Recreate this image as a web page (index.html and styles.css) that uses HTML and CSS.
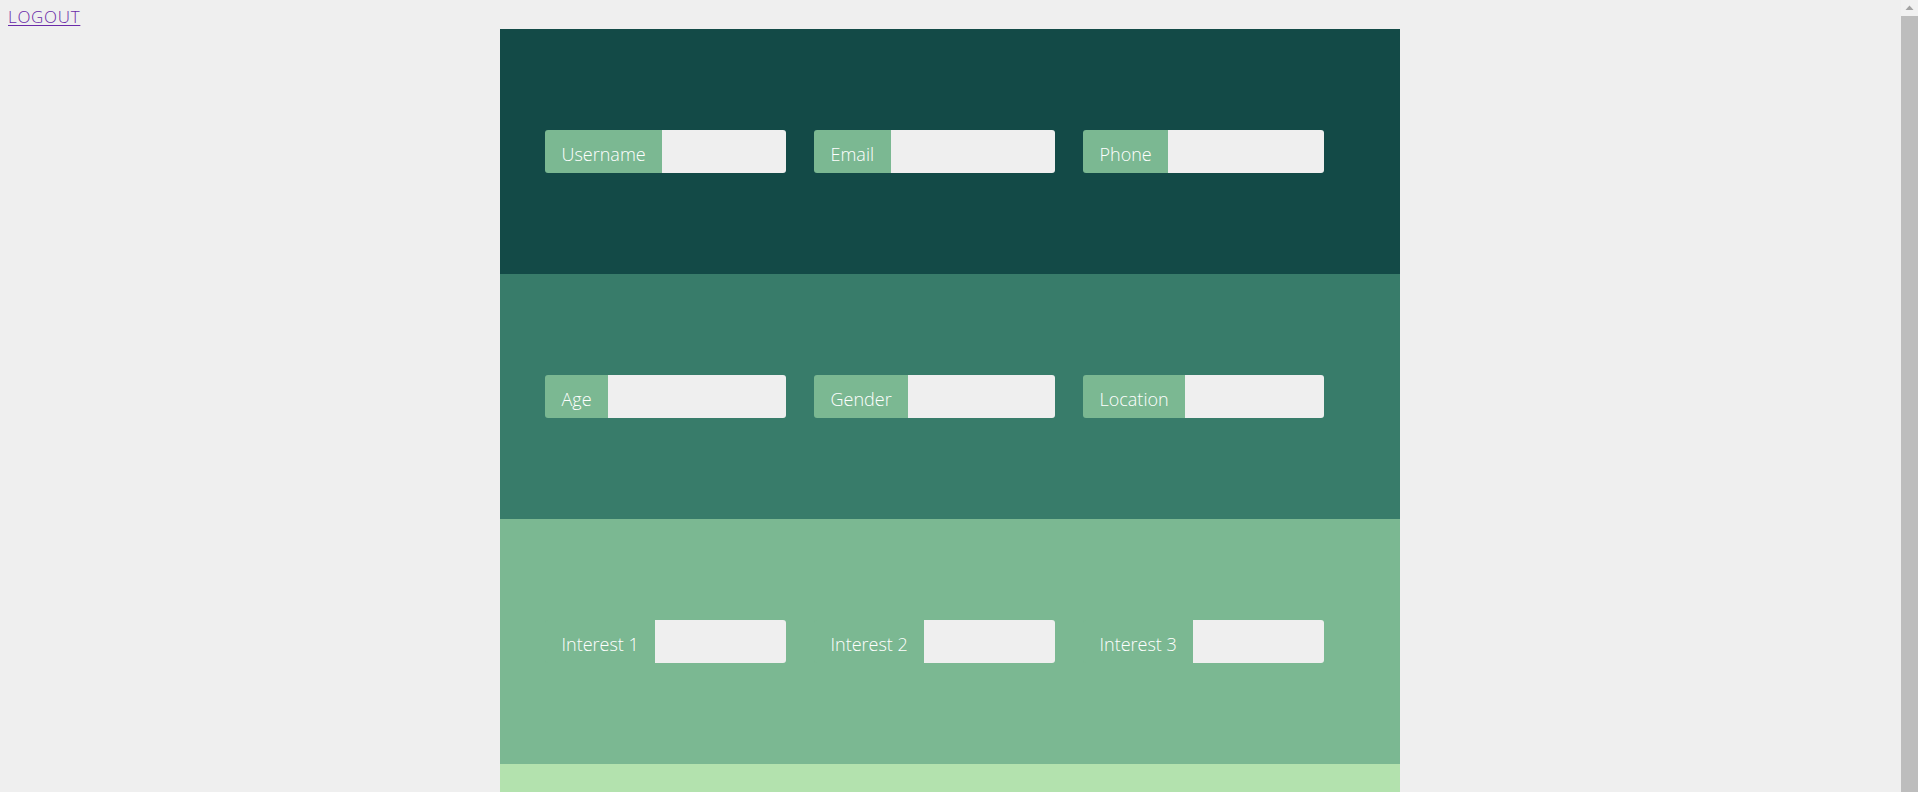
FILE: index.html
```html
<!DOCTYPE html>
<html>
<head>
<meta charset="utf-8">
<link rel="stylesheet" href="styles.css">
</head>
<body>
<a class="logout" href="#">LOGOUT</a>
<div class="container">
  <section class="band band-1">
    <div class="group"><span class="label">Username</span><input class="field" type="text"></div>
    <div class="group"><span class="label">Email</span><input class="field" type="text"></div>
    <div class="group"><span class="label">Phone</span><input class="field" type="text"></div>
  </section>
  <section class="band band-2">
    <div class="group"><span class="label">Age</span><input class="field" type="text"></div>
    <div class="group"><span class="label">Gender</span><input class="field" type="text"></div>
    <div class="group"><span class="label">Location</span><input class="field" type="text"></div>
  </section>
  <section class="band band-3">
    <div class="group"><span class="label">Interest 1</span><input class="field" type="text"></div>
    <div class="group"><span class="label">Interest 2</span><input class="field" type="text"></div>
    <div class="group"><span class="label">Interest 3</span><input class="field" type="text"></div>
  </section>
  <section class="band band-4"></section>
</div>
<div class="scrollbar">
  <div class="scroll-arrow">
    <svg width="17" height="16" viewBox="0 0 17 16"><polygon points="4.5,10 12.5,10 8.5,5.5" fill="#a3a3a3"/></svg>
  </div>
  <div class="scroll-thumb"></div>
</div>
</body>
</html>
```
FILE: styles.css
```css
html, body {
  background: #efefef;
}
body {
  margin: 8px 26px 8px 8px;
  font-family: "Open Sans", "Liberation Sans", sans-serif;
}
.logout {
  display: block;
  width: max-content;
  font-size: 17px;
  line-height: 18px;
  padding-bottom: 3px;
  letter-spacing: 0.7px;
  color: #6a2aa8;
  text-decoration: underline;
  text-underline-offset: 2px;
  font-weight: 300;
}
.container {
  width: 900px;
  margin: 0 auto;
}
.band {
  height: 245px;
  display: flex;
  align-items: center;
  gap: 28px;
  padding-left: 45px;
  box-sizing: border-box;
}
.band-1 { background: #134a47; }
.band-2 { background: #387c6a; }
.band-3 { background: #7bb892; }
.band-4 { background: #b3e2ae; }
.group {
  display: flex;
  width: 241px;
  height: 43px;
}
.label {
  display: flex;
  align-items: center;
  padding: 5px 16.5px 0;
  box-sizing: border-box;
  background: #7bb892;
  color: #ffffff;
  font-size: 18px;
  font-weight: 300;
  border-radius: 3px 0 0 3px;
  white-space: nowrap;
}
.field {
  flex: 1;
  min-width: 0;
  border: none;
  margin: 0;
  padding: 0 8px;
  background: #efefef;
  border-radius: 0 3px 3px 0;
  outline: none;
}
.scrollbar {
  position: fixed;
  top: 0;
  right: 0;
  bottom: 0;
  width: 17px;
  background: #f1f1f1;
  display: flex;
  flex-direction: column;
}
.scroll-arrow {
  height: 16px;
  flex: none;
}
.scroll-arrow svg {
  display: block;
}
.scroll-thumb {
  flex: 1;
  background: #bdbdbd;
}
```
